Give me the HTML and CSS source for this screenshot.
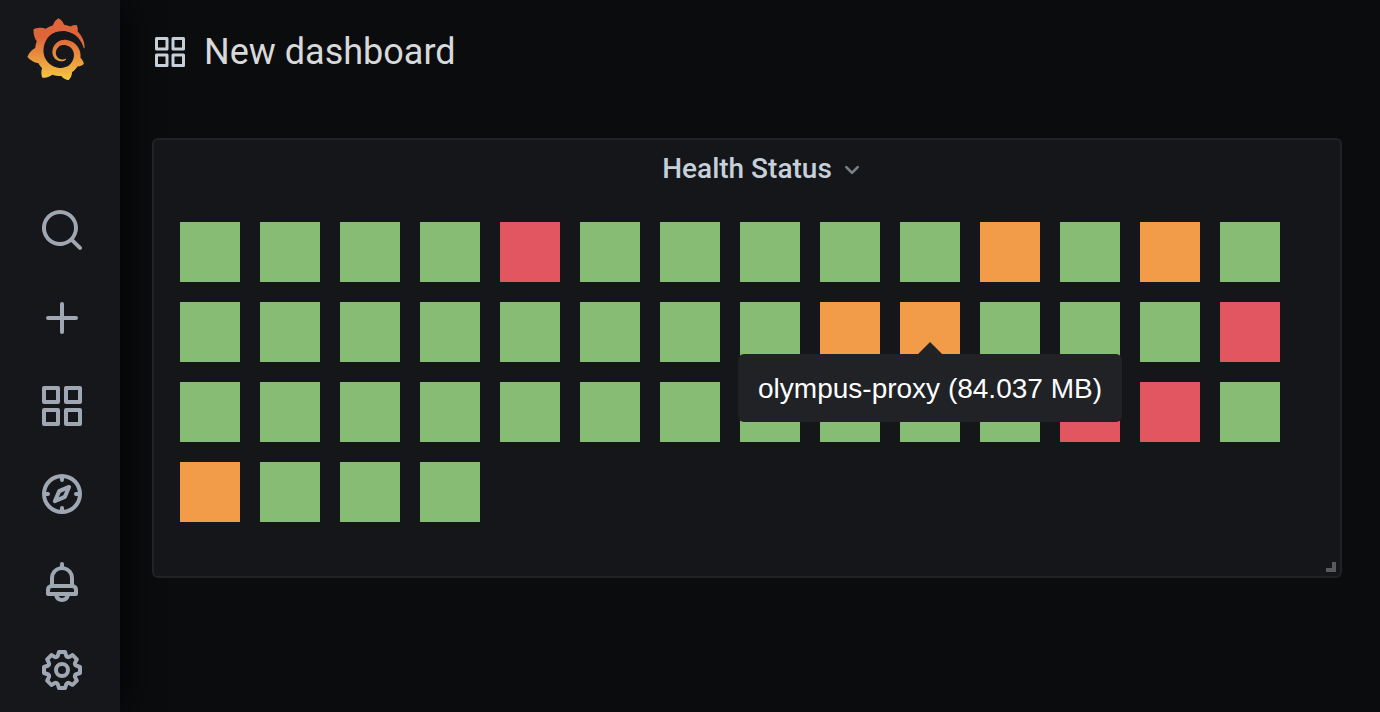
FILE: index.html
```html
<!DOCTYPE html>
<html lang="en">
<head>
<meta charset="utf-8">
<title>New dashboard</title>
<link rel="stylesheet" href="styles.css">
</head>
<body>
<div class="app">
  <nav class="sidebar" aria-label="Main">
    <a class="logo" href="#" aria-label="Home">
      <svg viewBox="0 0 351 365" aria-hidden="true">
        <defs>
          <linearGradient id="flame" gradientUnits="userSpaceOnUse" x1="175" y1="361" x2="175" y2="114">
            <stop offset="0" stop-color="#f4c842"/>
            <stop offset="1" stop-color="#df643a"/>
          </linearGradient>
        </defs>
        <path fill="url(#flame)" d="M342,161.2c-0.6-6.1-1.6-13.1-3.6-20.9c-2-7.7-5-16.2-9.4-25c-4.4-8.8-10.1-17.9-17.5-26.8c-2.9-3.5-6.1-6.9-9.5-10.2c5.1-20.3-6.2-37.9-6.2-37.9c-19.5-1.2-31.9,6.1-36.5,9.4c-0.8-0.3-1.5-0.7-2.3-1c-3.3-1.3-6.7-2.6-10.3-3.7c-3.5-1.1-7.1-2.1-10.8-3c-3.7-0.9-7.4-1.6-11.2-2.2c-0.7-0.1-1.3-0.2-2-0.3c-8.5-27.2-32.9-38.6-32.9-38.6c-27.3,17.3-32.4,41.5-32.4,41.5s-0.1,0.5-0.3,1.4c-1.5,0.4-3,0.9-4.5,1.3c-2.1,0.6-4.2,1.4-6.2,2.2c-2.1,0.8-4.1,1.6-6.2,2.5c-4.1,1.8-8.2,3.8-12.2,6c-3.9,2.2-7.7,4.6-11.4,7.1c-0.5-0.2-1-0.4-1-0.4c-37.8-14.4-71.3,2.9-71.3,2.9c-3.1,40.2,15.1,65.5,18.7,70.1c-0.9,2.5-1.7,5-2.5,7.5c-2.8,9.1-4.9,18.4-6.2,28.1c-0.2,1.4-0.4,2.8-0.5,4.2C18.8,192.7,8.5,228,8.5,228c29.1,33.5,63.1,35.6,63.1,35.6c0,0,0.1-0.1,0.1-0.1c4.3,7.7,9.3,15,14.9,21.9c2.4,2.9,4.8,5.6,7.4,8.3c-10.6,30.4,1.5,55.6,1.5,55.6c32.4,1.2,53.7-14.2,58.2-17.7c3.2,1.1,6.5,2.1,9.8,2.9c10,2.6,20.2,4.1,30.4,4.5c2.5,0.1,5.1,0.2,7.6,0.1l1.2,0l0.8,0l1.6,0l1.6-0.1l0,0.1c15.3,21.8,42.1,24.9,42.1,24.9c19.1-20.1,20.2-40.1,20.2-44.4l0,0c0,0,0-0.1,0-0.3c0-0.4,0-0.6,0-0.6l0,0c0-0.3,0-0.6,0-0.9c4-2.8,7.8-5.8,11.4-9.1c7.6-6.9,14.3-14.8,19.9-23.3c0.5-0.8,1-1.6,1.5-2.4c21.6,1.2,36.9-13.4,36.9-13.4c-3.6-22.5-16.4-33.5-19.1-35.6l0,0c0,0-0.1-0.1-0.3-0.2c-0.2-0.1-0.2-0.2-0.2-0.2c0,0,0,0,0,0c-0.1-0.1-0.3-0.2-0.5-0.3c0.1-1.4,0.2-2.7,0.3-4.1c0.2-2.4,0.2-4.9,0.2-7.3l0-1.8l0-0.9l0-0.5c0-0.6,0-0.4,0-0.6l-0.1-1.5l-0.1-2c0-0.7-0.1-1.3-0.2-1.9c-0.1-0.6-0.1-1.3-0.2-1.9l-0.2-1.9l-0.3-1.9c-0.4-2.5-0.8-4.9-1.4-7.4c-2.3-9.7-6.1-18.9-11-27.2c-5-8.3-11.2-15.6-18.3-21.8c-7-6.2-14.9-11.2-23.1-14.9c-8.3-3.7-16.9-6.1-25.5-7.2c-4.3-0.6-8.6-0.8-12.9-0.7l-1.6,0l-0.4,0c-0.1,0-0.6,0-0.5,0l-0.7,0l-1.6,0.1c-0.6,0-1.2,0.1-1.7,0.1c-2.2,0.2-4.4,0.5-6.5,0.9c-8.6,1.6-16.7,4.7-23.8,9c-7.1,4.3-13.3,9.6-18.3,15.6c-5,6-8.9,12.7-11.6,19.6c-2.7,6.9-4.2,14.1-4.6,21c-0.1,1.7-0.1,3.5-0.1,5.2c0,0.4,0,0.9,0,1.3l0.1,1.4c0.1,0.8,0.1,1.7,0.2,2.5c0.3,3.5,1,6.9,1.9,10.1c1.9,6.5,4.9,12.4,8.6,17.4c3.7,5,8.2,9.1,12.9,12.4c4.7,3.2,9.8,5.5,14.8,7c5,1.5,10,2.1,14.7,2.1c0.6,0,1.2,0,1.7,0c0.3,0,0.6,0,0.9,0c0.3,0,0.6,0,0.9-0.1c0.5,0,1-0.1,1.5-0.1c0.1,0,0.3,0,0.4-0.1l0.5-0.1c0.3,0,0.6-0.1,0.9-0.1c0.6-0.1,1.1-0.2,1.7-0.3c0.6-0.1,1.1-0.2,1.6-0.4c1.1-0.2,2.1-0.6,3.1-0.9c2-0.7,4-1.5,5.7-2.4c1.8-0.9,3.4-2,5-3c0.4-0.3,0.9-0.6,1.3-1c1.6-1.3,1.9-3.7,0.6-5.3c-1.1-1.4-3.1-1.8-4.7-0.9c-0.4,0.2-0.8,0.4-1.2,0.6c-1.4,0.7-2.8,1.3-4.3,1.8c-1.5,0.5-3.1,0.9-4.7,1.2c-0.8,0.1-1.6,0.2-2.5,0.3c-0.4,0-0.8,0.1-1.3,0.1c-0.4,0-0.9,0-1.2,0c-0.4,0-0.8,0-1.2,0c-0.5,0-1,0-1.5-0.1c0,0-0.3,0-0.1,0l-0.2,0l-0.3,0c-0.2,0-0.5,0-0.7-0.1c-0.5-0.1-0.9-0.1-1.4-0.2c-3.7-0.5-7.4-1.6-10.9-3.2c-3.6-1.6-7-3.8-10.1-6.6c-3.1-2.8-5.8-6.1-7.9-9.9c-2.1-3.8-3.6-8-4.3-12.4c-0.3-2.2-0.5-4.5-0.4-6.7c0-0.6,0.1-1.2,0.1-1.8c0,0.2,0-0.1,0-0.1l0-0.2l0-0.5c0-0.3,0.1-0.6,0.1-0.9c0.1-1.2,0.3-2.4,0.5-3.6c1.7-9.6,6.5-19,13.9-26.1c1.9-1.8,3.9-3.4,6-4.9c2.1-1.5,4.4-2.8,6.8-3.9c2.4-1.1,4.8-2,7.4-2.7c2.5-0.7,5.1-1.1,7.8-1.4c1.3-0.1,2.6-0.2,4-0.2c0.4,0,0.6,0,0.9,0l1.1,0l0.7,0c0.3,0,0,0,0.1,0l0.3,0l1.1,0.1c2.9,0.2,5.7,0.6,8.5,1.3c5.6,1.2,11.1,3.3,16.2,6.1c10.2,5.7,18.9,14.5,24.2,25.1c2.7,5.3,4.6,11,5.5,16.9c0.2,1.5,0.4,3,0.5,4.5l0.1,1.1l0.1,1.1c0,0.4,0,0.8,0,1.1c0,0.4,0,0.8,0,1.1l0,1l0,1.1c0,0.7-0.1,1.9-0.1,2.6c-0.1,1.6-0.3,3.3-0.5,4.9c-0.2,1.6-0.5,3.2-0.8,4.8c-0.3,1.6-0.7,3.2-1.1,4.7c-0.8,3.1-1.8,6.2-3,9.3c-2.4,6-5.6,11.8-9.4,17.1c-7.7,10.6-18.2,19.2-30.2,24.7c-6,2.7-12.3,4.7-18.8,5.7c-3.2,0.6-6.5,0.9-9.8,1l-0.6,0l-0.5,0l-1.1,0l-1.6,0l-0.8,0c0.4,0-0.1,0-0.1,0l-0.3,0c-1.8,0-3.5-0.1-5.3-0.3c-7-0.5-13.9-1.8-20.7-3.7c-6.7-1.9-13.2-4.6-19.4-7.8c-12.3-6.6-23.4-15.6-32-26.5c-4.3-5.4-8.1-11.3-11.2-17.4c-3.1-6.1-5.6-12.6-7.4-19.1c-1.8-6.6-2.9-13.3-3.4-20.1l-0.1-1.3l0-0.3l0-0.3l0-0.6l0-1.1l0-0.3l0-0.4l0-0.8l0-1.6l0-0.3c0,0,0,0.1,0-0.1l0-0.6c0-0.8,0-1.7,0-2.5c0.1-3.3,0.4-6.8,0.8-10.2c0.4-3.4,1-6.9,1.7-10.3c0.7-3.4,1.5-6.8,2.5-10.2c1.9-6.7,4.3-13.2,7.1-19.3c5.7-12.2,13.1-23.1,22-31.8c2.2-2.2,4.5-4.2,6.9-6.2c2.4-1.9,4.9-3.7,7.5-5.4c2.5-1.7,5.2-3.2,7.9-4.6c1.3-0.7,2.7-1.4,4.1-2c0.7-0.3,1.4-0.6,2.1-0.9c0.7-0.3,1.4-0.6,2.1-0.9c2.8-1.2,5.7-2.2,8.7-3.1c0.7-0.2,1.5-0.4,2.2-0.7c0.7-0.2,1.5-0.4,2.2-0.6c1.5-0.4,3-0.8,4.5-1.1c0.7-0.2,1.5-0.3,2.3-0.5c0.8-0.2,1.5-0.3,2.3-0.5c0.8-0.1,1.5-0.3,2.3-0.4l1.1-0.2l1.2-0.2c0.8-0.1,1.5-0.2,2.3-0.3c0.9-0.1,1.7-0.2,2.6-0.3c0.7-0.1,1.9-0.2,2.6-0.3c0.5-0.1,1.1-0.1,1.6-0.2l1.1-0.1l0.5-0.1l0.6,0c0.9-0.1,1.7-0.1,2.6-0.2l1.3-0.1c0,0,0.5,0,0.1,0l0.3,0l0.6,0c0.7,0,1.5-0.1,2.2-0.1c2.9-0.1,5.9-0.1,8.8,0c5.8,0.2,11.5,0.9,17,1.9c11.1,2.1,21.5,5.6,31,10.3c9.5,4.6,17.9,10.3,25.3,16.5c0.5,0.4,0.9,0.8,1.4,1.2c0.4,0.4,0.9,0.8,1.3,1.2c0.9,0.8,1.7,1.6,2.6,2.4c0.9,0.8,1.7,1.6,2.5,2.4c0.8,0.8,1.6,1.6,2.4,2.5c3.1,3.3,6,6.6,8.6,10c5.2,6.7,9.4,13.5,12.7,19.9c0.2,0.4,0.4,0.8,0.6,1.2c0.2,0.4,0.4,0.8,0.6,1.2c0.4,0.8,0.8,1.6,1.1,2.4c0.4,0.8,0.7,1.5,1.1,2.3c0.3,0.8,0.7,1.5,1,2.3c1.2,3,2.4,5.9,3.3,8.6c1.5,4.4,2.6,8.3,3.5,11.7c0.3,1.4,1.6,2.3,3,2.1c1.5-0.1,2.6-1.3,2.6-2.8C342.6,170.4,342.5,166.1,342,161.2z"/>
      </svg>
    </a>
    <div class="menu">
      <a class="menu-link" href="#" aria-label="Search">
        <svg class="icon" viewBox="0 0 24 24" aria-hidden="true"><path d="M21.71,20.29,18,16.61A9,9,0,1,0,16.61,18l3.68,3.68a1,1,0,0,0,1.42,0A1,1,0,0,0,21.71,20.29ZM11,18a7,7,0,1,1,7-7A7,7,0,0,1,11,18Z"/></svg>
      </a>
      <a class="menu-link" href="#" aria-label="Create">
        <svg class="icon" viewBox="0 0 24 24" aria-hidden="true"><path d="M19,11H13V5a1,1,0,0,0-2,0v6H5a1,1,0,0,0,0,2h6v6a1,1,0,0,0,2,0V13h6a1,1,0,0,0,0-2Z"/></svg>
      </a>
      <a class="menu-link" href="#" aria-label="Dashboards">
        <svg class="icon" viewBox="0 0 24 24" aria-hidden="true"><path id="apps" d="M10,13H3a1,1,0,0,0-1,1v7a1,1,0,0,0,1,1h7a1,1,0,0,0,1-1V14A1,1,0,0,0,10,13ZM9,20H4V15H9ZM21,2H14a1,1,0,0,0-1,1v7a1,1,0,0,0,1,1h7a1,1,0,0,0,1-1V3A1,1,0,0,0,21,2ZM20,9H15V4h5Zm1,4H14a1,1,0,0,0-1,1v7a1,1,0,0,0,1,1h7a1,1,0,0,0,1-1V14A1,1,0,0,0,21,13Zm-1,7H15V15h5ZM10,2H3A1,1,0,0,0,2,3v7a1,1,0,0,0,1,1h7a1,1,0,0,0,1-1V3A1,1,0,0,0,10,2ZM9,9H4V4H9Z"/></svg>
      </a>
      <a class="menu-link" href="#" aria-label="Explore">
        <svg class="icon" viewBox="0 0 24 24" aria-hidden="true"><path d="M12,2A10,10,0,1,0,22,12,10,10,0,0,0,12,2Zm1,17.93V19a1,1,0,0,0-2,0v.93A8,8,0,0,1,4.07,13H5a1,1,0,0,0,0-2H4.07A8,8,0,0,1,11,4.07V5a1,1,0,0,0,2,0V4.07A8,8,0,0,1,19.93,11H19a1,1,0,0,0,0,2h.93A8,8,0,0,1,13,19.93ZM15.14,7.55l-5,2.12a1,1,0,0,0-.52.52l-2.12,5a1,1,0,0,0,.21,1.1,1,1,0,0,0,.7.3.93.93,0,0,0,.4-.09l5-2.12a1,1,0,0,0,.52-.52l2.12-5a1,1,0,0,0-1.31-1.31Zm-2.49,5.1-2.28,1,1-2.28,2.28-1Z"/></svg>
      </a>
      <a class="menu-link" href="#" aria-label="Alerting">
        <svg class="icon" viewBox="0 0 24 24" aria-hidden="true"><path d="M18,13.18V10a6,6,0,0,0-5-5.91V3a1,1,0,0,0-2,0V4.09A6,6,0,0,0,6,10v3.18A3,3,0,0,0,4,16v2a1,1,0,0,0,1,1H8.14a4,4,0,0,0,7.72,0H19a1,1,0,0,0,1-1V16A3,3,0,0,0,18,13.18ZM8,10a4,4,0,0,1,8,0v3H8Zm4,10a2,2,0,0,1-1.72-1h3.44A2,2,0,0,1,12,20Zm6-3H6V16a1,1,0,0,1,1-1H17a1,1,0,0,1,1,1Z"/></svg>
      </a>
      <a class="menu-link" href="#" aria-label="Configuration">
        <svg class="icon" viewBox="0 0 24 24" aria-hidden="true"><path d="M21.32,9.55l-1.89-.63.89-1.78A1,1,0,0,0,20.13,6L18,3.87a1,1,0,0,0-1.15-.19l-1.78.89-.63-1.89A1,1,0,0,0,13.5,2h-3a1,1,0,0,0-.95.68L8.92,4.57,7.14,3.68A1,1,0,0,0,6,3.87L3.87,6a1,1,0,0,0-.19,1.15l.89,1.78-1.89.63A1,1,0,0,0,2,10.5v3a1,1,0,0,0,.68.95l1.89.63-.89,1.78A1,1,0,0,0,3.87,18L6,20.13a1,1,0,0,0,1.15.19l1.78-.89.63,1.89a1,1,0,0,0,.95.68h3a1,1,0,0,0,.95-.68l.63-1.89,1.78.89A1,1,0,0,0,18,20.13L20.13,18a1,1,0,0,0,.19-1.15l-.89-1.78,1.89-.63A1,1,0,0,0,22,13.5v-3A1,1,0,0,0,21.32,9.55ZM20,12.78l-1.2.4A2,2,0,0,0,17.64,16l.57,1.14-1.1,1.1L16,17.64a2,2,0,0,0-2.79,1.16l-.4,1.2H11.22l-.4-1.2A2,2,0,0,0,8,17.64l-1.14.57-1.1-1.1L6.36,16A2,2,0,0,0,5.2,13.18L4,12.78V11.22l1.2-.4A2,2,0,0,0,6.36,8L5.79,6.89l1.1-1.1L8,6.36A2,2,0,0,0,10.82,5.2l.4-1.2h1.56l.4,1.2A2,2,0,0,0,16,6.36l1.14-.57,1.1,1.1L17.64,8a2,2,0,0,0,1.16,2.79l1.2.4ZM12,8a4,4,0,1,0,4,4A4,4,0,0,0,12,8Zm0,6a2,2,0,1,1,2-2A2,2,0,0,1,12,14Z"/></svg>
      </a>
    </div>
  </nav>

  <main class="page">
    <header class="toolbar">
      <svg class="toolbar-icon" viewBox="0 0 24 24" aria-hidden="true"><use href="#apps"/></svg>
      <h1 class="title">New dashboard</h1>
    </header>

    <section class="panel" aria-labelledby="panel-title">
      <div class="panel-header">
        <button class="panel-menu" type="button">
          <span id="panel-title">Health Status</span>
          <svg class="chevron" viewBox="0 0 24 24" aria-hidden="true"><path d="M17,9.17a1,1,0,0,0-1.41,0L12,12.71,8.46,9.17a1,1,0,0,0-1.41,0,1,1,0,0,0,0,1.42l4.24,4.24a1,1,0,0,0,1.42,0L17,10.59A1,1,0,0,0,17,9.17Z"/></svg>
        </button>
      </div>
      <ul class="statuses">
        <li class="cell"></li><li class="cell"></li><li class="cell"></li><li class="cell"></li><li class="cell critical"></li><li class="cell"></li><li class="cell"></li>
        <li class="cell"></li><li class="cell"></li><li class="cell"></li><li class="cell warning"></li><li class="cell"></li><li class="cell warning"></li><li class="cell"></li>
        <li class="cell"></li><li class="cell"></li><li class="cell"></li><li class="cell"></li><li class="cell"></li><li class="cell"></li><li class="cell"></li>
        <li class="cell"></li><li class="cell warning"></li><li class="cell warning"><span class="tooltip" role="tooltip">olympus-proxy (84.037 MB)</span></li><li class="cell"></li><li class="cell"></li><li class="cell"></li><li class="cell critical"></li>
        <li class="cell"></li><li class="cell"></li><li class="cell"></li><li class="cell"></li><li class="cell"></li><li class="cell"></li><li class="cell"></li>
        <li class="cell"></li><li class="cell"></li><li class="cell"></li><li class="cell"></li><li class="cell critical"></li><li class="cell critical"></li><li class="cell"></li>
        <li class="cell warning"></li><li class="cell"></li><li class="cell"></li><li class="cell"></li>
      </ul>
      <span class="resize-handle"></span>
    </section>
  </main>
</div>
</body>
</html>
```

FILE: styles.css
```css
* {
  box-sizing: border-box;
}

body {
  margin: 0;
  background: #0b0c0e;
  color: #d8d9da;
  font-family: Roboto, "Liberation Sans", sans-serif;
}

.app {
  display: flex;
  min-height: 100vh;
}

.sidebar {
  flex: none;
  width: 120px;
  padding-top: 18px;
  background: #15171a;
  box-shadow: 0 0 40px #000;
}

.logo {
  display: block;
  width: 60px;
  margin-left: 26px;
}

.logo svg {
  display: block;
  width: 100%;
}

.menu {
  display: flex;
  flex-direction: column;
  gap: 40px;
  margin-top: 126px;
  padding-left: 38px;
}

.menu-link,
.icon {
  display: block;
  width: 48px;
  height: 48px;
}

.icon {
  fill: #9fa7b3;
}

.page {
  flex: 1;
  min-width: 0;
  padding: 24px 38px 0 32px;
}

.toolbar {
  display: flex;
  align-items: center;
  gap: 16px;
  height: 56px;
}

.toolbar-icon {
  width: 36px;
  height: 36px;
  fill: #c7d0d9;
}

.title {
  margin: 0;
  font-size: 36px;
  font-weight: 400;
  line-height: 48px;
}

.panel {
  position: relative;
  margin-top: 58px;
  padding: 0 26px 54px;
  background: #141619;
  border: 2px solid #202226;
  border-radius: 6px;
}

.panel-header {
  display: flex;
  justify-content: center;
}

.panel-menu {
  position: relative;
  padding: 0;
  border: 0;
  background: none;
  color: #c7d0d9;
  font: 500 28px/58px Roboto, "Liberation Sans", sans-serif;
}

.chevron {
  position: absolute;
  top: 14px;
  left: 100%;
  width: 32px;
  height: 32px;
  margin-left: 4px;
  fill: #7b8087;
}

.statuses {
  display: flex;
  flex-wrap: wrap;
  gap: 20px;
  margin: 24px 0 0;
  padding: 0;
  list-style: none;
}

.cell {
  position: relative;
  width: 60px;
  height: 60px;
  background: #86bc73;
}

.warning {
  background: #f29c4a;
}

.critical {
  background: #e15661;
}

.tooltip {
  position: absolute;
  z-index: 1;
  top: 52px;
  left: 50%;
  padding: 15px 20px 13px;
  transform: translateX(-50%);
  border-radius: 6px;
  background: #202226;
  color: #fff;
  font: 28px/40px "Liberation Sans", Arial, sans-serif;
  white-space: nowrap;
}

.tooltip::before {
  content: "";
  position: absolute;
  bottom: 100%;
  left: 50%;
  margin-left: -12px;
  border: 12px solid transparent;
  border-top: 0;
  border-bottom-color: #202226;
}

.resize-handle {
  position: absolute;
  right: 4px;
  bottom: 4px;
  width: 10px;
  height: 10px;
  border: solid #595a5c;
  border-width: 0 4px 4px 0;
}
```
